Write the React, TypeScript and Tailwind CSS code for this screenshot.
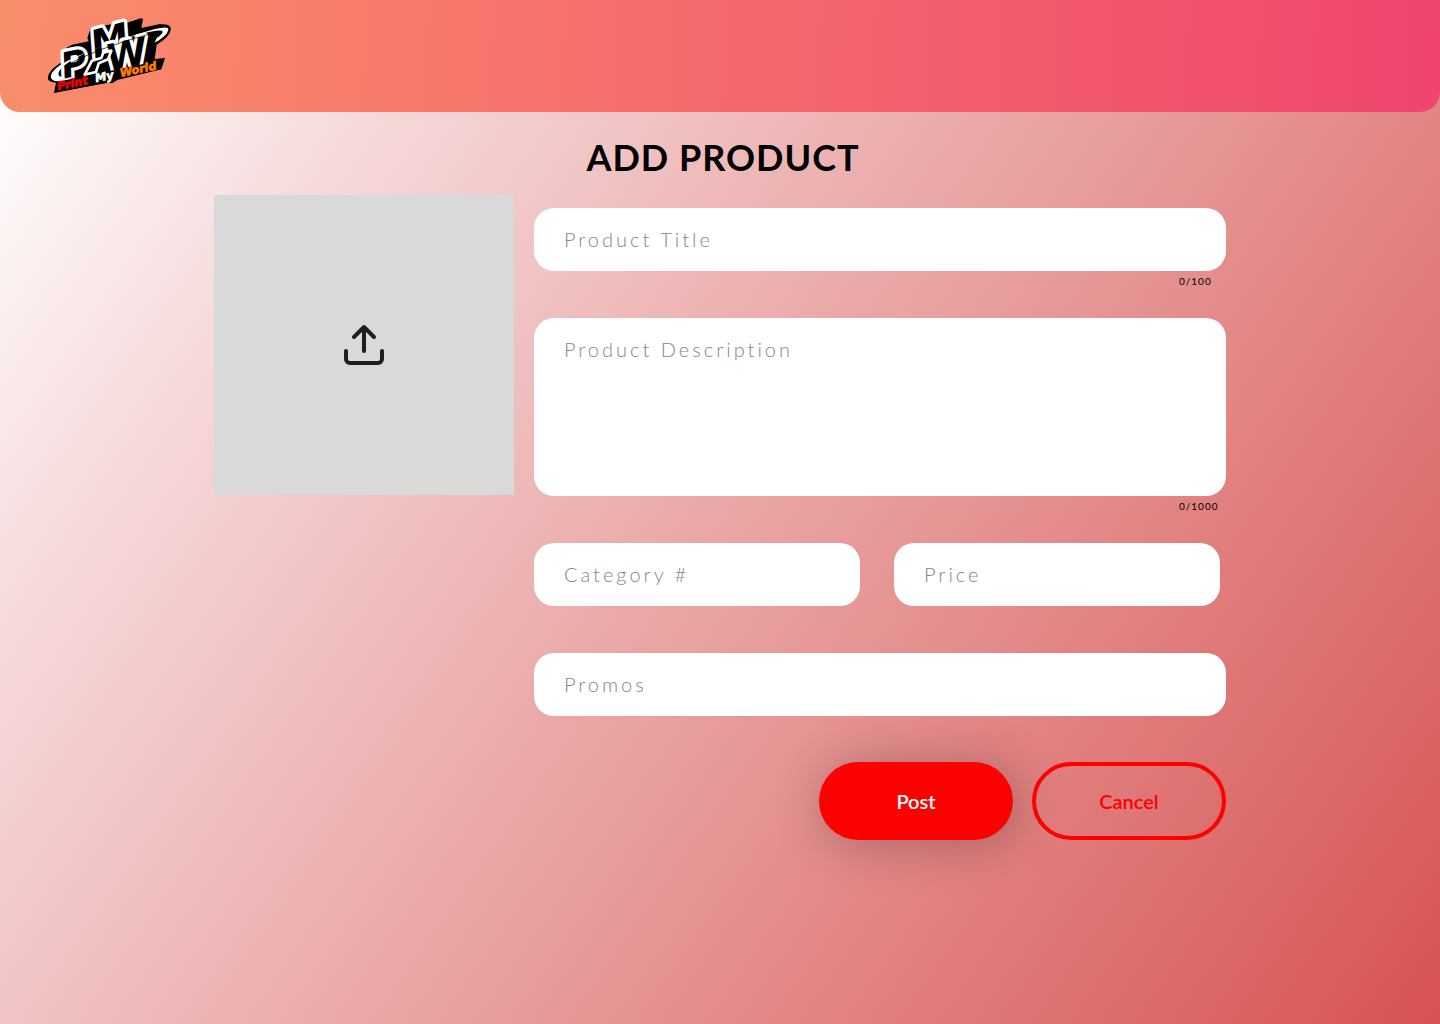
import React from "react";

function Logo() {
  return (
    <svg viewBox="0 0 420 270" className="h-[90px] w-[140px]" role="img" aria-label="Print My World">
      <path
        d="M24 208 Q20 184 66 156 L78 114 L96 104 L146 94 L142 84 L152 54 L218 42 L226 50 L304 24 L309 28 L304 54 L360 42 Q396 42 392 60 Q390 80 350 104 L344 147 L375 144 L364 178 L232 210 L216 220 L200 218 L42 249 L48 218 Q30 218 24 208 Z"
        fill="#000"
      />
      <g
        fontFamily="'DejaVu Sans', sans-serif"
        fontWeight="700"
        fontStyle="italic"
        fill="#000"
        stroke="#fff"
        strokeWidth="20"
        strokeLinejoin="round"
        paintOrder="stroke"
      >
        <text transform="translate(164 146) rotate(-15)" fontSize="116">M</text>
        <text transform="translate(72 206) rotate(-13)" fontSize="106">P</text>
        <text transform="translate(208 186) rotate(-13)" fontSize="112">W</text>
      </g>
      <path d="M134 194 L168 186 L176 160 L204 148 L214 122 L190 128 L184 144 L156 152 Z" fill="#000" stroke="#fff" strokeWidth="8" strokeLinejoin="round" />
      <path
        d="M66 214 Q22 216 36 188 Q54 160 138 128 Q248 84 342 58 Q392 46 384 62 Q380 78 344 98 L350 84 Q374 68 366 62 Q346 60 282 78 Q152 114 84 158 Q50 182 56 196 Q60 202 70 200 Z"
        fill="#fff"
      />
      <path d="M72 170 Q160 118 336 70" fill="none" stroke="#000" strokeWidth="2" />
      <path d="M50 216 L372 149 L362 178 L232 206 L216 216 L44 247 Z" fill="#000" />
      <g fontFamily="'DejaVu Sans', sans-serif" fontWeight="700" fontStyle="italic" fontSize="34" strokeWidth="2">
        <text transform="translate(54 241) rotate(-12)" fill="#f00000" stroke="#f00000">Print</text>
        <text transform="translate(168 217) rotate(-12)" fill="#fff" stroke="#fff">My</text>
        <text transform="translate(242 201) rotate(-12)" fill="#ff7a00" stroke="#ff7a00">World</text>
      </g>
    </svg>
  );
}

const field =
  "block w-full rounded-[20px] bg-white px-[30px] text-xl leading-6 font-light tracking-[3px] text-black outline-none placeholder:text-[#858585]";

function Field({ label, name }: { label: string; name: string }) {
  return <input type="text" name={name} aria-label={label} placeholder={label} className={`${field} h-[63px] pb-0.5`} />;
}

function Counter({ children }: { children: React.ReactNode }) {
  return (
    <div className="flex h-5 justify-end">
      <span className="w-[47px] text-[10px] leading-5 tracking-[1px] whitespace-nowrap">{children}</span>
    </div>
  );
}

export default function App() {
  return (
    <div className="min-h-screen bg-[linear-gradient(125deg,#ffffff_2%,#f6d9da_21%,#ebaaaa_48%,#d65352_100%)] font-['Lato',sans-serif] text-black">
      <header className="flex h-28 items-start rounded-b-[20px] bg-[linear-gradient(93deg,#f98e6b_0%,#f56c6c_46%,#ef456e_100%)] px-10 pt-2.5">
        <Logo />
      </header>

      <main className="mx-auto max-w-[1012px] pt-[21px] pb-12">
        <h1 className="pl-1.5 text-center text-4xl leading-12 font-bold tracking-[1px]">ADD PRODUCT</h1>

        <form className="mt-3.5 flex items-start gap-5">
          <button type="button" aria-label="Upload image" className="flex size-[300px] shrink-0 items-center justify-center bg-[#d9d9d9]">
            <svg viewBox="0 0 48 48" className="size-12" fill="none" stroke="#1e1e1e" strokeWidth="4" strokeLinecap="round" strokeLinejoin="round">
              <path d="M42 30v8a4 4 0 0 1-4 4H10a4 4 0 0 1-4-4v-8M34 16 24 6 14 16M24 6v24" />
            </svg>
          </button>

          <div className="min-w-0 flex-1 pt-[13px]">
            <Field label="Product Title" name="title" />
            <Counter>0/100</Counter>

            <textarea
              name="description"
              aria-label="Product Description"
              placeholder="Product Description"
              className={`${field} mt-[27px] h-[178px] resize-none py-[19px]`}
            />
            <Counter>0/1000</Counter>

            <div className="mt-[27px] grid grid-cols-2 gap-[34px] pr-1.5">
              <Field label="Category #" name="category" />
              <Field label="Price" name="price" />
            </div>

            <div className="mt-[47px]">
              <Field label="Promos" name="promos" />
            </div>

            <div className="mt-[46px] flex justify-end gap-[19px] text-xl font-semibold">
              <button type="submit" className="h-[78px] w-[194px] rounded-[40px] bg-[#fb0200] text-white shadow-[4px_4px_50px_rgba(0,0,0,0.25)]">
                Post
              </button>
              <button type="button" className="h-[78px] w-[194px] rounded-[40px] border-4 border-[#fb0200] text-[#fb0200]">
                Cancel
              </button>
            </div>
          </div>
        </form>
      </main>
    </div>
  );
}
